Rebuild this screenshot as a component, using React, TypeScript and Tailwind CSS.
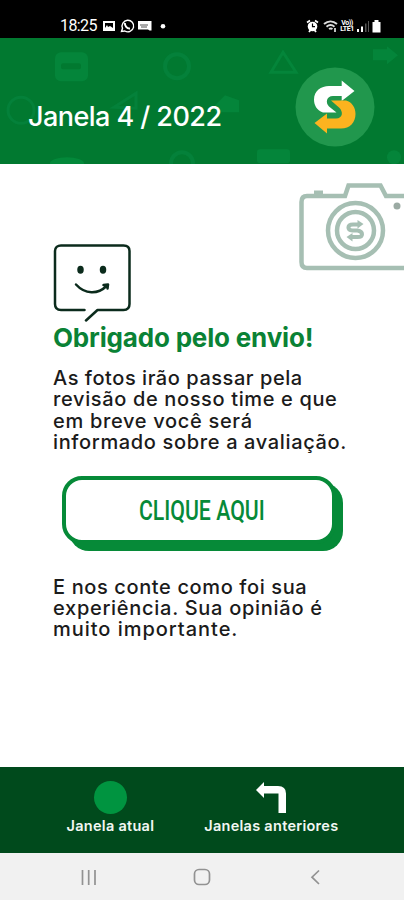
import type { ReactNode } from "react";

const StatusBar = () => (
  <div className="flex h-[38px] items-end justify-between bg-black pb-[4px] pl-[60px] pr-[20px] text-white">
    <div className="flex items-center">
      <span className="w-[42px] whitespace-nowrap font-['Roboto',sans-serif] text-[16px] leading-4 tracking-[-0.6px]">
        18:25
      </span>
      <svg className="h-4 w-[67px]" viewBox="0 0 67 16" fill="none">
        <path d="M1 3h12v10H1z" fill="#fff" />
        <path d="M3 5h8v5l-3-2-2 1-1-2-2 3z" fill="#000" />
        <path
          d="M19.500 13.500l1-3.200A5.800 5.800 0 1 1 22.800 13z"
          stroke="#fff"
          strokeWidth="1.400"
        />
        <path d="M23 5c-.5 2.500 2 6 5 5.500" stroke="#fff" strokeWidth="2" />
        <path d="M36 3h13.500v9.500h-2L46 11.500H36z" fill="#fff" />
        <path d="M38 7h8M39 9h6" stroke="#555" strokeWidth="1" />
        <circle cx="61" cy="8.300" r="2.300" fill="#fff" />
      </svg>
    </div>
    <div className="flex items-center">
      <svg className="h-4 w-[33px]" viewBox="0 0 33 16" fill="none">
        <circle cx="6.500" cy="8.500" r="4.800" fill="#fff" />
        <path
          d="M1 4.500l3-2M12 4.500l-3-2M3 14l1.500-2M10 14l-1.500-2"
          stroke="#fff"
          strokeWidth="1.800"
        />
        <path d="M6.500 5.500v3.200h2.500" stroke="#000" strokeWidth="1.200" />
        <path
          d="M18 6c4-3.500 9-3.500 13 0M20.500 8.700c2.500-2 5.500-2 8 0M23 11c1.200-.8 2.300-.8 3.500 0"
          stroke="#ddd"
          strokeWidth="1.900"
        />
        <path d="M29 10v4" stroke="#fff" strokeWidth="1.500" />
      </svg>
      <span className="flex w-[16px] flex-col items-center font-['Roboto',sans-serif] text-[7px] font-bold leading-[6.500px] tracking-[-0.4px]">
        <span>Vo))</span>
        <span>LTE1</span>
      </span>
      <svg className="h-4 w-[29px]" viewBox="0 0 29 16">
        <path d="M2 11h2v3H2zM6 8.500h2V14H6z" fill="#fff" />
        <path d="M10 5.500h1.500V14H10zM13 3h1v11h-1z" fill="#555" />
        <path d="M17.500 4h2V2h4v2h2v10.500h-8z" fill="#fff" />
      </svg>
    </div>
  </div>
);

const HeaderPattern = () => (
  <svg
    className="absolute inset-0 h-full w-full"
    viewBox="0 0 404 125"
    fill="none"
  >
    <rect x="55" y="14" width="33" height="29" rx="6" fill="#04853a" />
    <rect x="61" y="25" width="20" height="6" rx="2" fill="#017930" />
    <circle cx="177" cy="28" r="12" stroke="#04813a" strokeWidth="4" />
    <circle cx="21" cy="72" r="13" stroke="#04813a" strokeWidth="3" />
    <path d="M114 69l22-14v15z" stroke="#04813a" strokeWidth="3" />
    <path d="M271 34l12-20 13 20z" stroke="#04853a" strokeWidth="3" />
    <path d="M373 11h14v-3l11 9-11 9v-4h-14z" fill="#04853a" />
    <path d="M239 74v-12l-14-5-10 10v7z" fill="#04853a" />
    <circle cx="182" cy="125" r="11" stroke="#04813a" strokeWidth="4" />
    <ellipse cx="67" cy="125" rx="17" ry="6" fill="#03893a" />
    <rect x="257" y="111" width="33" height="14" rx="3" fill="#04853a" />
    <circle cx="394" cy="119" r="7" fill="#04853a" />
  </svg>
);

const Header = () => (
  <header className="relative flex h-[125.500px] items-start justify-between bg-[#017930] pl-[28px] pr-[29px]">
    <HeaderPattern />
    <h1 className="relative mt-[63px] whitespace-nowrap text-[27px] font-medium leading-8 tracking-[-0.550px] text-white">
      Janela 4 / 2022
    </h1>
    <svg className="relative mt-[29px] size-[80px]" viewBox="0 0 80 80">
      <circle cx="40" cy="40" r="39.500" fill="#21974d" />
      <path
        d="M46.700 13.500L59.500 24L46.700 34V29H38C31 29 30.500 36 34 39.500L41.500 45.500H28C21.500 43 19 38 19 32.500C19 24 26 19 34 19H46.700Z"
        fill="#fff"
      />
      <path
        d="M32 66.500L19.500 56L32 46.500V51.500H41C48 51.500 48.500 44.500 44 40.500L36 33.500H51C57 35 60.500 40.500 60.500 47C60.500 55.500 55 61.500 46 61.500H32Z"
        fill="#fcb31f"
      />
    </svg>
  </header>
);

const Smiley = () => (
  <svg
    className="mt-[61px] h-[80px] w-[82px]"
    viewBox="0 0 82 80"
    fill="none"
    stroke="#0b2b1c"
    strokeWidth="2.500"
    strokeLinecap="round"
    strokeLinejoin="round"
  >
    <path d="M31.500 67H8C4.500 67 2 65 2 61V8C2 4.500 4.500 2.500 8 2.500H70.500C74.500 2.500 76.500 4.500 76.500 8V61C76.500 65 74.500 67 70.500 67H44.500L33 77.500" />
    <ellipse cx="27.500" cy="26.800" rx="2" ry="2.800" fill="#0b2b1c" />
    <ellipse cx="50" cy="26.800" rx="2" ry="2.800" fill="#0b2b1c" />
    <path d="M23 41.500C32 51.500 45 51.500 53.500 43M50.500 42L55 41.500L54.500 45.500" />
  </svg>
);

const Camera = () => (
  <svg
    className="h-[92px] w-[106px]"
    viewBox="0 0 106 92"
    fill="none"
    stroke="#a6bfb3"
    strokeWidth="4.500"
  >
    <path d="M106 14H88L82.500 3.500H50.500L47 14H9Q3.500 14 3.500 20V80Q3.500 86 9 86H106" />
    <path d="M16 10.500h9" strokeWidth="4" />
    <circle cx="57.500" cy="48.500" r="27.500" />
    <circle cx="57.500" cy="48.500" r="18.500" />
    <path
      d="M60 42.500H55C49 42.500 49 48 54.500 48.500H59.500C65.500 49.500 65.500 55 59.500 55H54"
      strokeWidth="4"
    />
    <path
      d="M59.500 38L65.500 42L59.500 46.500ZM54.500 51L48.500 55L54.500 59.500Z"
      fill="#a6bfb3"
      stroke="none"
    />
    <circle cx="99" cy="24" r="3.500" fill="#9baaa3" stroke="none" />
  </svg>
);

const Line = ({
  className,
  children,
}: {
  className: string;
  children: ReactNode;
}) => <span className={`block whitespace-nowrap ${className}`}>{children}</span>;

const BottomBar = () => (
  <nav className="flex h-[86px] justify-center gap-[50px] bg-[#004a1c] pl-px pt-[13px] text-[14.500px] font-semibold leading-5 text-[#f2f7f3]">
    <button className="flex flex-col items-center">
      <span className="mt-px size-[33px] rounded-full bg-[#009440]" />
      <span className="mt-[2px] whitespace-nowrap tracking-[0.270px]">
        Janela atual
      </span>
    </button>
    <button className="flex flex-col items-center">
      <svg className="h-[36px] w-[32px]" viewBox="0 0 32 36">
        <path
          d="M1 10L9 2V6H23Q31 6 31 13.500V33H23.500V13.500H9V18Z"
          fill="#fff"
        />
      </svg>
      <span className="whitespace-nowrap tracking-[0.280px]">
        Janelas anteriores
      </span>
    </button>
  </nav>
);

const SystemNav = () => (
  <div className="h-[47px] bg-[#f1f1f1]">
    <svg
      className="h-full w-full"
      viewBox="0 0 404 47"
      fill="none"
      stroke="#929292"
      strokeWidth="1.700"
    >
      <path d="M82.500 17V32M88.700 17V32M95 17V32" />
      <rect x="194.500" y="16.500" width="15" height="15" rx="4.500" />
      <path d="M319 17.500L312 24.200L319 31" />
    </svg>
  </div>
);

export default function App() {
  return (
    <div className="flex h-[900px] w-[404px] flex-col overflow-hidden bg-white font-['Inter',sans-serif]">
      <StatusBar />
      <Header />
      <main className="flex-1">
        <div className="flex items-start justify-between pl-[53px] pt-[18.500px]">
          <Smiley />
          <Camera />
        </div>
        <div className="pl-[53px] text-[#1b1b1b]">
          <h2 className="whitespace-nowrap text-[26px] font-bold leading-[30px] tracking-[-0.180px] text-[#0a8235]">
            Obrigado pelo envio!
          </h2>
          <p className="mt-[15px] text-[20px] font-medium leading-[21.300px]">
            <Line className="tracking-[0.550px]">As fotos irão passar pela</Line>
            <Line className="tracking-[0.640px]">revisão de nosso time e que</Line>
            <Line className="tracking-[0.680px]">em breve você será</Line>
            <Line className="tracking-[0.650px]">informado sobre a avaliação.</Line>
          </p>
          <button className="ml-[9px] mt-[22.500px] flex h-[68px] w-[274px] items-center justify-center rounded-[20px] border-[4px] border-[#068a38] bg-white text-[#068a38] shadow-[7px_7px_0_#068a38]">
            <span className="ml-[6px] mt-[2px] inline-block scale-x-[0.760] whitespace-nowrap font-['Roboto',sans-serif] text-[28px] font-medium">
              CLIQUE AQUI
            </span>
          </button>
          <p className="mt-[33px] text-[20px] font-medium leading-[21.300px]">
            <Line className="tracking-[0.620px]">E nos conte como foi sua</Line>
            <Line className="tracking-[0.710px]">experiência. Sua opinião é</Line>
            <Line className="tracking-[0.970px]">muito importante.</Line>
          </p>
        </div>
      </main>
      <BottomBar />
      <SystemNav />
    </div>
  );
}
